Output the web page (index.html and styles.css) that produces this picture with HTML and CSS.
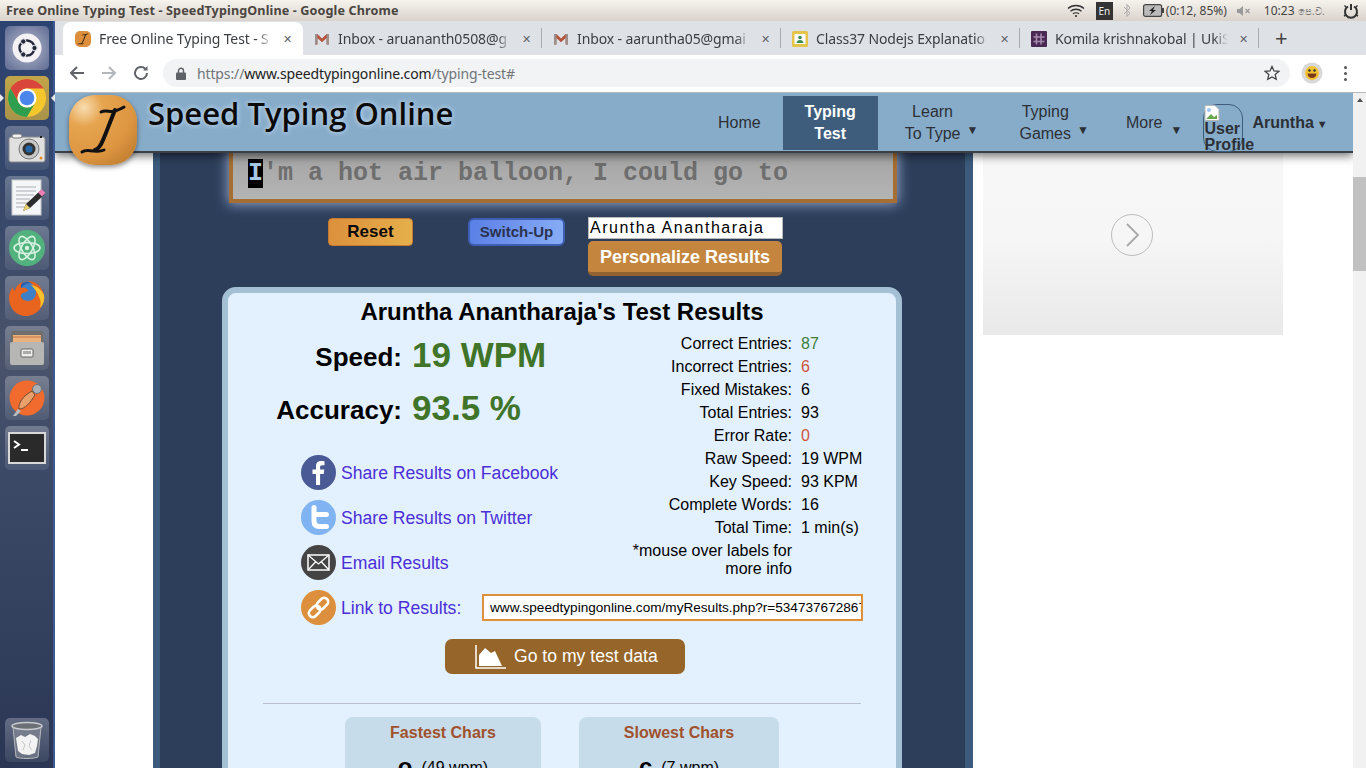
FILE: index.html
```html
<!DOCTYPE html>
<html lang="en">
<head>
	<meta charset="UTF-8">
	<title>Free Online Typing Test - SpeedTypingOnline</title>
	<link rel="stylesheet" href="styles.css">
</head>
<body>
	<svg class="defs" width="0" height="0">
		<symbol id="gmail" viewBox="0 0 16 16"><path d="M1 3h2.400L8 7.600 12.600 3H15v10.500h-2.400V7L8 11.200 3.400 7v6.500H1z" fill="#b5523b"/><path d="M3.400 7v6.500H1V3h2.400zM12.600 7v6.500H15V3h-2.400z" fill="#9b8f8a"/></symbol>
		<symbol id="logo-beam" viewBox="0 0 68 70"><g fill="none" stroke="#111" stroke-linecap="round"><path d="M32 17c5-3 9 1 14-1 3-1 6-2 9-4" stroke-width="3"/><path d="M46 15C41 27 38 36 34 45c-2 5-4 9-8 10" stroke-width="4"/><path d="M13 57c4-3 8-1 12-1 4 .5 7 .5 10-1" stroke-width="3"/></g></symbol>
	</svg>

	<div class="topbar">
		<div class="win-title">Free Online Typing Test - SpeedTypingOnline - Google Chrome</div>
		<div class="indicators">
			<svg class="ind-wifi" width="18" height="14" viewBox="0 0 18 14" fill="none" stroke="#333" stroke-width="1.400"><path d="M1 4.500c4.500-4 11.500-4 16 0M3.500 7.200c3-2.600 8-2.600 11 0M6 9.800c1.600-1.300 4.400-1.300 6 0"/><circle cx="9" cy="12" r="1.100" fill="#333" stroke="none"/></svg>
			<span class="ind-lang">En</span>
			<svg class="ind-bt" width="8" height="15" viewBox="0 0 8 15" fill="none" stroke="#aaa" stroke-width="1"><path d="M1 4l6 6-3 3.500v-12L7 5l-6 6"/></svg>
			<svg class="ind-bat" width="21" height="13" viewBox="0 0 21 13"><rect x=".6" y=".6" width="18" height="11.800" rx="2" fill="#bbb" stroke="#444" stroke-width="1.200"/><rect x="19" y="4" width="2" height="5" fill="#444"/><path d="M12 2L6 7h3l-2 4 6-5h-3z" fill="#222"/></svg>
			<span class="ind-txt">(0:12, 85%)</span>
			<svg class="ind-vol" width="14" height="12" viewBox="0 0 14 12"><path d="M0 4h2.500L6 1v10L2.500 8H0z" fill="#999"/><path d="M8.500 4l4 4M12.500 4l-4 4" stroke="#999" stroke-width="1.200"/></svg>
			<span class="ind-txt ind-clock">10:23 <span class="ind-ampm">පෙ.ව.</span></span>
			<svg class="ind-power" width="16" height="16" viewBox="0 0 16 16" fill="none" stroke="#333" stroke-width="2"><path d="M5 3.500a6 6 0 1 0 6 0M8 1v6"/><path d="M1.500 2.500l2 2M14.500 2.500l-2 2M1 13l2-1M15 13l-2-1" stroke-width="1.400"/></svg>
		</div>
	</div>

	<div class="desktop">
		<div class="launcher">
			<div class="launch-item launch-dash">
				<svg width="30" height="30" viewBox="0 0 30 30"><circle cx="15" cy="15" r="14.500" fill="#f4f2f4"/><circle cx="15" cy="15" r="7.500" fill="none" stroke="#262a40" stroke-width="2.400"/><circle cx="22.500" cy="15" r="2.700" fill="#262a40" stroke="#f4f2f4"/><circle cx="11.300" cy="8.500" r="2.700" fill="#262a40" stroke="#f4f2f4"/><circle cx="11.300" cy="21.500" r="2.700" fill="#262a40" stroke="#f4f2f4"/></svg>
			</div>
			<div class="launch-item launch-active">
				<svg width="40" height="40" viewBox="0 0 40 40"><circle cx="20" cy="20" r="19" fill="#f6c62d"/><path d="M36.450 10.500H20A9.500 9.500 0 0 0 11.770 24.750L3.550 10.500A19 19 0 0 1 36.450 10.500z" fill="#d9453a"/><path d="M3.550 10.500L11.770 24.750A9.500 9.500 0 0 0 28.230 24.750L20 39A19 19 0 0 1 3.550 10.500z" fill="#2f9e4f"/><circle cx="20" cy="20" r="9.500" fill="#fff"/><circle cx="20" cy="20" r="7.300" fill="#4a86ec"/></svg>
			</div>
			<div class="launch-item">
				<svg width="38" height="30" viewBox="0 0 38 30"><rect x="1" y="4" width="36" height="25" rx="2" fill="#e0e0e0" stroke="#8a8a8a"/><rect x="4" y="1" width="10" height="4" rx="2" fill="#f2f2f2" stroke="#777"/><circle cx="21" cy="16" r="10" fill="#c8c8c8" stroke="#777"/><circle cx="21" cy="16" r="6.500" fill="#333"/><circle cx="21" cy="16" r="3.500" fill="#2566a8"/><rect x="32" y="3" width="2" height="2" fill="#222"/><circle cx="33" cy="25" r="1.500" fill="#e88a22"/></svg>
			</div>
			<div class="launch-item">
				<svg width="40" height="40" viewBox="0 0 40 40"><rect x="5" y="2" width="29" height="35" fill="#f4f6f8" stroke="#c5c9cc"/><path d="M9 9h20M9 13h20M9 17h18M9 21h14M9 25h12M9 29h10" stroke="#a9afb5" stroke-width="1"/><path d="M16 33l3-7 15-14 4 4-15 14z" fill="#2c2c2c"/><path d="M31 14.500l3.500-3.500 4 4-3.500 3.500z" fill="#e97fb5"/><path d="M16 33l3-7 4 4z" fill="#e8d06a"/></svg>
			</div>
			<div class="launch-item">
				<svg width="38" height="38" viewBox="0 0 38 38"><circle cx="19" cy="19" r="18" fill="#51b27e"/><g fill="none" stroke="#d8f2e2" stroke-width="1.600"><ellipse cx="19" cy="19" rx="13" ry="5.500"/><ellipse cx="19" cy="19" rx="13" ry="5.500" transform="rotate(60 19 19)"/><ellipse cx="19" cy="19" rx="13" ry="5.500" transform="rotate(120 19 19)"/></g><circle cx="19" cy="19" r="2.200" fill="#d8f2e2"/></svg>
			</div>
			<div class="launch-item">
				<svg width="40" height="40" viewBox="0 0 40 40"><circle cx="21" cy="19" r="15" fill="#2a5fa8"/><circle cx="23" cy="15" r="10" fill="#3f7fc6"/><path d="M37 17c1 11-7 21-18 21C9 38 2 30 2 20c0-5 2-9 4-11 0 2 .5 3 1.500 4C9 8 12 5 16 4c-2 2-2.500 4-2 6 4-1 7 1 7 3-2 2-6 1-7 4s3 6 7 6 8-3 8-8c0-5-3-9-8-12 8 0 14 6 16 14z" fill="#e8641f"/><path d="M37 17c1 5-1 10-4 13 1-4 1-8-1-11-1-4-4-8-8-12 6 1 11 5 13 10z" fill="#f8c22c"/></svg>
			</div>
			<div class="launch-item">
				<svg width="38" height="36" viewBox="0 0 38 36"><rect x="3" y="1" width="32" height="15" rx="2" fill="#6f6e6a"/><rect x="5" y="5" width="28" height="9" fill="#ecb27c"/><path d="M5 7h28" stroke="#c4794a"/><rect x="2" y="12" width="34" height="23" rx="2" fill="#b6b6b4"/><rect x="13" y="19" width="12" height="8" rx="1" fill="#eee" stroke="#666"/><rect x="15" y="21" width="8" height="3" fill="#aaa"/></svg>
			</div>
			<div class="launch-item">
				<svg width="40" height="40" viewBox="0 0 40 40"><circle cx="20" cy="20" r="17.500" fill="#f26b2e"/><path d="M6 38l5-7 3 2-5 5z" fill="#b9bcc0"/><path d="M12 31c-1-6 4-13 13-18l3 4c-5 8-10 14-16 14z" fill="#e9a06a" stroke="#6b4a33"/><circle cx="30" cy="11" r="4.500" fill="#aab0b5" stroke="#6d7276"/></svg>
			</div>
			<div class="launch-item">
				<svg width="38" height="32" viewBox="0 0 38 32"><rect x="1" y="1" width="36" height="30" fill="#2a2a2a" stroke="#d8d8d8" stroke-width="2"/><path d="M6 9l5 3.500L6 16" fill="none" stroke="#fff" stroke-width="2"/><path d="M13 18h7" stroke="#fff" stroke-width="2"/></svg>
			</div>
			<div class="launch-item launch-trash">
				<svg width="34" height="38" viewBox="0 0 34 38"><path d="M3 6l3 30c4 2 18 2 22 0l3-30z" fill="#8f949c" fill-opacity=".55" stroke="#b5b8bc"/><ellipse cx="17" cy="5" rx="15" ry="3.500" fill="#6b6f76" stroke="#c9cccf" stroke-width="1.600"/><path d="M6 17l5-3 4 2 5-3 5 2 3 3-1 7-2 7-6 2-7-1-4-3z" fill="#f2f2f2"/><path d="M12 20l3 4-2 5M21 19l-2 6 3 4" fill="none" stroke="#c4c6c8"/></svg>
			</div>
		</div>

		<div class="chrome">
			<div class="tabstrip">
				<div class="tab tab-active">
					<span class="fav-logo"><svg width="16" height="16"><use href="#logo-beam"/></svg></span>
					<span class="tab-title">Free Online Typing Test - S</span>
					<span class="tab-x">✕</span>
				</div>
				<div class="tab">
					<svg class="fav" width="16" height="16"><use href="#gmail"/></svg>
					<span class="tab-title">Inbox - aruananth0508@g</span>
					<span class="tab-x">✕</span>
				</div>
				<div class="tab">
					<svg class="fav" width="16" height="16"><use href="#gmail"/></svg>
					<span class="tab-title">Inbox - aaruntha05@gmai</span>
					<span class="tab-x">✕</span>
				</div>
				<div class="tab">
					<svg class="fav" width="16" height="16" viewBox="0 0 16 16"><rect width="16" height="16" rx="1.500" fill="#e6c34a"/><rect x="2.500" y="3" width="11" height="10" fill="#fff"/><circle cx="8" cy="6.500" r="1.800" fill="#3d8b4f"/><path d="M4.500 12c0-4 7-4 7 0z" fill="#3d8b4f"/></svg>
					<span class="tab-title">Class37 Nodejs Explanatio</span>
					<span class="tab-x">✕</span>
				</div>
				<div class="tab">
					<svg class="fav" width="16" height="16" viewBox="0 0 16 16"><rect width="16" height="16" rx="1" fill="#4a2a55"/><path d="M5.500 2.500v11M10 2.500v11M2.500 6h11M2.500 10.500h11" stroke="#a58aae" stroke-width="1.600"/></svg>
					<span class="tab-title">Komila krishnakobal | UkiS</span>
					<span class="tab-x">✕</span>
				</div>
				<span class="tab-new">+</span>
			</div>

			<div class="toolbar">
				<svg class="tool-back" width="16" height="16" viewBox="0 0 16 16" fill="none" stroke="#5f6368" stroke-width="2"><path d="M15 8H2M8 2L2 8l6 6"/></svg>
				<svg class="tool-fwd" width="16" height="16" viewBox="0 0 16 16" fill="none" stroke="#b4b7ba" stroke-width="2"><path d="M1 8h13M8 2l6 6-6 6"/></svg>
				<svg class="tool-reload" width="16" height="16" viewBox="0 0 16 16" fill="none" stroke="#5f6368" stroke-width="2"><path d="M14 8a6 6 0 1 1-1.800-4.300"/><path d="M14.500 1v4.500H10" fill="#5f6368" stroke="none"/></svg>
				<div class="omnibox">
					<svg class="lock" width="10" height="13" viewBox="0 0 10 13"><path d="M2.500 6V3.800a2.500 2.500 0 0 1 5 0V6" fill="none" stroke="#5f6368" stroke-width="1.400"/><rect y="5.500" width="10" height="7.500" rx="1" fill="#5f6368"/></svg>
					<span class="url"><span class="url-dim">https://</span>www.speedtypingonline.com<span class="url-dim">/typing-test#</span></span>
					<svg class="star" width="16" height="16" viewBox="0 0 16 16"><path d="M8 1.500l2 4.400 4.800.5-3.600 3.200 1 4.700L8 11.900l-4.200 2.400 1-4.700L1.200 6.400 6 5.900z" fill="none" stroke="#444" stroke-width="1.300"/></svg>
				</div>
				<svg class="avatar" width="22" height="22" viewBox="0 0 22 22"><circle cx="11" cy="11" r="10.500" fill="#d8d8d8"/><circle cx="11" cy="11" r="7" fill="#f2c233"/><path d="M6.500 11.500h9c0 6-9 6-9 0z" fill="#7a3b1a"/><circle cx="8.500" cy="8.500" r="1.300" fill="#333"/><circle cx="13.500" cy="8.500" r="1.300" fill="#333"/></svg>
				<div class="tool-menu"><i></i><i></i><i></i></div>
			</div>

			<div class="viewport">
				<div class="page">
					<div class="nav">
						<div class="logo-tile"><svg width="68" height="70"><use href="#logo-beam"/></svg></div>
						<div class="logo-text">Speed Typing Online</div>
						<div class="nav-links">
							<a class="nav-link nav-home">Home</a>
							<a class="nav-link nav-active">Typing<br>Test</a>
							<a class="nav-link nav-learn">Learn<br>To Type<span class="caret">▼</span></a>
							<a class="nav-link nav-games">Typing<br>Games<span class="caret">▼</span></a>
							<a class="nav-link nav-more">More<span class="caret caret-more">▼</span></a>
							<div class="nav-user">
								<div class="user-pic">
									<svg width="16" height="16" viewBox="0 0 16 16"><path d="M1 .500h10l4 4v11H1z" fill="#fff" stroke="#b5b5b5"/><path d="M2 14l5-5 3 3 3-2v4z" fill="#6aa84f"/><circle cx="5" cy="5" r="2" fill="#9fc5f0"/></svg>
									<span class="user-alt">User Profile</span>
								</div>
								<span class="user-name">Aruntha</span><span class="user-caret">▼</span>
							</div>
						</div>
					</div>

					<div class="main-panel">
						<div class="typing-box">
							<div class="typing-line"><span class="cursor-char">I</span>'m a hot air balloon, I could go to</div>
						</div>

						<div class="controls">
							<button class="btn-reset">Reset</button>
							<button class="btn-switch">Switch-Up</button>
							<div class="name-col">
								<div class="name-input">Aruntha Anantharaja</div>
								<button class="btn-person">Personalize Results</button>
							</div>
						</div>

						<div class="results">
							<h1 class="res-title">Aruntha Anantharaja's Test Results</h1>
							<div class="res-body">
								<div class="res-left">
									<div class="metric"><span class="metric-label">Speed:</span><span class="metric-val">19 WPM</span></div>
									<div class="metric"><span class="metric-label">Accuracy:</span><span class="metric-val">93.5 %</span></div>
									<div class="share-list">
										<div class="share-row">
											<svg class="share-ico" width="35" height="35" viewBox="0 0 35 35"><circle cx="17.500" cy="17.500" r="17.500" fill="#4a5a94"/><path d="M15 30V19h-3.500v-4.500H15v-3.200C15 7.600 17 6 20.300 6c1.500 0 2.700.1 3.200.2v4h-2.300c-1.700 0-2.100.8-2.100 2v2.300h4.200l-.6 4.500h-3.600v11z" fill="#fff"/></svg>
											<a class="share-link">Share Results on Facebook</a>
										</div>
										<div class="share-row">
											<svg class="share-ico" width="35" height="35" viewBox="0 0 35 35"><circle cx="17.500" cy="17.500" r="17.500" fill="#7fb3f2"/><path d="M13 7.500v13.500c0 3.500 2 5.500 5.500 5.500h7M13.500 14.500h12" fill="none" stroke="#fff" stroke-width="5" stroke-linecap="round"/></svg>
											<a class="share-link">Share Results on Twitter</a>
										</div>
										<div class="share-row">
											<svg class="share-ico" width="35" height="35" viewBox="0 0 35 35"><circle cx="17.500" cy="17.500" r="17.500" fill="#444"/><rect x="7" y="10" width="21" height="15" fill="none" stroke="#fff" stroke-width="1.500"/><path d="M7 10l10.500 9L28 10M7 25l7.500-8M28 25l-7.500-8" fill="none" stroke="#fff" stroke-width="1.300"/></svg>
											<a class="share-link">Email Results</a>
										</div>
									</div>
								</div>
								<div class="res-right">
									<div class="stats">
										<span class="stat-label">Correct Entries:</span><span class="stat-good">87</span>
										<span class="stat-label">Incorrect Entries:</span><span class="stat-bad">6</span>
										<span class="stat-label">Fixed Mistakes:</span><span>6</span>
										<span class="stat-label">Total Entries:</span><span>93</span>
										<span class="stat-label">Error Rate:</span><span class="stat-bad">0</span>
										<span class="stat-label">Raw Speed:</span><span>19 WPM</span>
										<span class="stat-label">Key Speed:</span><span>93 KPM</span>
										<span class="stat-label">Complete Words:</span><span>16</span>
										<span class="stat-label">Total Time:</span><span>1 min(s)</span>
									</div>
									<div class="stats-note">*mouse over labels for<br>more info</div>
								</div>
							</div>
							<div class="link-row">
								<svg class="share-ico" width="35" height="35" viewBox="0 0 35 35"><circle cx="17.500" cy="17.500" r="17.500" fill="#dc8f3c"/><g fill="none" stroke="#fff" stroke-width="2.600" transform="rotate(-45 17.500 17.500)"><rect x="5.500" y="13.500" width="13" height="8" rx="4"/><rect x="16.500" y="13.500" width="13" height="8" rx="4"/></g></svg>
								<a class="share-link link-label">Link to Results:</a>
								<div class="link-input">www.speedtypingonline.com/myResults.php?r=534737672867</div>
							</div>
							<div class="data-btn">
								<svg width="31" height="24" viewBox="0 0 31 24"><path d="M1 0v23h30" fill="none" stroke="#fff" stroke-width="1.500"/><path d="M4 21V10l6-7 6 5 4-2 7 15z" fill="#fff"/></svg>
								<span>Go to my test data</span>
							</div>
							<div class="res-rule"></div>
							<div class="char-boxes">
								<div class="char-box">
									<div class="char-head">Fastest Chars</div>
									<div class="char-row"><b>o</b><span>(49 wpm)</span></div>
								</div>
								<div class="char-box char-box-slow">
									<div class="char-head">Slowest Chars</div>
									<div class="char-row"><b>c</b><span>(7 wpm)</span></div>
								</div>
							</div>
						</div>
					</div>

					<div class="ad-col">
						<div class="ad-box">
							<svg width="44" height="44" viewBox="0 0 44 44" fill="none"><circle cx="22" cy="22" r="20.500" stroke="#bdbdbd"/><path d="M17 11l11 11-11 11" stroke="#a8a8a8" stroke-width="1.800"/></svg>
						</div>
					</div>
				</div>
				<div class="scrollbar">
					<span class="sb-up"></span>
					<div class="sb-thumb"></div>
				</div>
			</div>
		</div>
	</div>
</body>
</html>
```
FILE: styles.css
```css
*{
	margin: 0;
	padding: 0;
	box-sizing: border-box;
}
html, body{
	width: 1366px;
	height: 768px;
	overflow: hidden;
}
body{
	font-family: "Liberation Sans", Arial, sans-serif;
	background: #fff;
}
.defs{
	display: block;
	height: 0;
}

/* ubuntu top bar */
.topbar{
	height: 21px;
	display: flex;
	justify-content: space-between;
	align-items: center;
	background: linear-gradient(#f6f3ee, #d9d3cb);
	font-family: "Noto Sans", sans-serif;
	color: #4a4540;
}
.win-title{
	padding-left: 6px;
	font-size: 12.600px;
	font-weight: 700;
	letter-spacing: .12px;
}
.indicators{
	display: flex;
	align-items: center;
	height: 21px;
	font-size: 12px;
	color: #444;
}
.ind-wifi{
	margin-right: 11px;
}
.ind-lang{
	width: 17px;
	height: 18px;
	background: #333;
	color: #eee;
	font-size: 10px;
	line-height: 18px;
	text-align: center;
	margin-right: 10px;
}
.ind-bt{
	margin-right: 12px;
}
.ind-bat{
	margin-right: 2px;
}
.ind-vol{
	margin: 0 13px 0 10px;
}
.ind-ampm{
	color: #777;
	font-size: 10px;
	font-family: "DejaVu Sans", sans-serif;
}
.ind-power{
	margin: 0 7px 0 18px;
}

.desktop{
	display: flex;
	height: 747px;
}

/* launcher */
.launcher{
	width: 55px;
	flex: none;
	padding: 5px 0 6px 5px;
	display: flex;
	flex-direction: column;
	gap: 6px;
	background: linear-gradient(#2c4270 0, #37486a 25%, #4a536a 45%, #3c4a68 60%, #2a3654 100%);
	border-right: 2px solid #3b5994;
}
.launch-item{
	width: 44px;
	height: 44px;
	flex: none;
	display: flex;
	align-items: center;
	justify-content: center;
	border-radius: 5px;
	background: linear-gradient(rgba(255,255,255,.26), rgba(255,255,255,.08));
}
.launch-dash{
	background: radial-gradient(circle at 50% 50%, #c5c9d8 0, #8f97b3 45%, #5d6b92 100%);
}
.launch-active{
	background: linear-gradient(#c2a54a, #a8934a);
	position: relative;
}
.launch-active::before, .launch-active::after{
	content: "";
	position: absolute;
	top: 18px;
	border: 4px solid transparent;
}
.launch-active::before{
	left: -5px;
	border-left-color: #e8e8e8;
}
.launch-active::after{
	right: -6px;
	border-right-color: #e8e8e8;
}
.launch-trash{
	margin-top: auto;
}

/* chrome */
.chrome{
	flex: 1;
	min-width: 0;
	display: flex;
	flex-direction: column;
}
.tabstrip{
	height: 34px;
	flex: none;
	padding: 1px 0 0 8px;
	display: flex;
	align-items: stretch;
	background: #dee1e6;
	font-family: "Noto Sans", sans-serif;
	font-size: 14px;
	color: #3c4043;
}
.tab{
	width: 239px;
	padding: 0 8px 0 11px;
	display: flex;
	align-items: center;
	position: relative;
}
.tab + .tab::after{
	content: "";
	position: absolute;
	right: 0;
	top: 6px;
	bottom: 7px;
	width: 1px;
	background: #a8aaae;
}
.tab-active{
	width: 240px;
	padding-left: 12px;
	background: #fff;
	border-radius: 8px 8px 0 0;
}
.fav{
	flex: none;
}
.fav-logo{
	width: 16px;
	height: 16px;
	flex: none;
	border-radius: 5px;
	background: #dc8f3c;
}
.fav-logo svg{
	display: block;
}
.tab-title{
	flex: 1;
	min-width: 0;
	margin-left: 8px;
	overflow: hidden;
	white-space: nowrap;
	letter-spacing: -.12px;
	-webkit-mask-image: linear-gradient(to left, transparent 0, #000 14px);
	mask-image: linear-gradient(to left, transparent 0, #000 14px);
}
.tab-x{
	width: 16px;
	margin-left: 7px;
	text-align: center;
	font-size: 11px;
	color: #5f6368;
}
.tab-new{
	margin-left: 16px;
	font-size: 22px;
	line-height: 31px;
	color: #444;
}
.toolbar{
	height: 38px;
	flex: none;
	display: flex;
	align-items: center;
	padding-bottom: 1px;
	background: #fff;
	border-bottom: 1px solid #b9b9b9;
}
.tool-back{
	margin-left: 14px;
}
.tool-fwd{
	margin-left: 16px;
}
.tool-reload{
	margin-left: 16px;
}
.omnibox{
	width: 1127px;
	height: 28px;
	margin-left: 14px;
	padding: 0 10px 0 13px;
	display: flex;
	align-items: center;
	border-radius: 14px;
	background: #f1f3f4;
	font-family: "Noto Sans", sans-serif;
	font-size: 14px;
}
.url{
	flex: 1;
	margin-left: 11px;
	color: #222;
	letter-spacing: -.13px;
}
.url-dim{
	color: #70757a;
}
.avatar{
	margin-left: 11px;
}
.tool-menu{
	margin-left: 21px;
	display: flex;
	flex-direction: column;
	gap: 3px;
}
.tool-menu i{
	width: 3px;
	height: 3px;
	border-radius: 50%;
	background: #555;
}

/* page */
.viewport{
	flex: 1;
	min-height: 0;
	display: flex;
}
.page{
	flex: 1;
	min-width: 0;
	position: relative;
	overflow: hidden;
	display: flex;
	align-items: flex-start;
	padding-left: 98px;
}
.scrollbar{
	width: 13px;
	flex: none;
	background: #f1f1f1;
	position: relative;
}
.sb-up{
	display: block;
	width: 0;
	margin: 5px auto 0;
	border: 3.500px solid transparent;
	border-top: 0;
	border-bottom: 4px solid #505050;
}
.sb-thumb{
	position: absolute;
	left: 0;
	right: 0;
	top: 84px;
	height: 94px;
	background: #c1c1c1;
}

/* fixed nav bar over the page */
.nav{
	position: absolute;
	left: 0;
	right: 0;
	top: 0;
	height: 60px;
	display: flex;
	background: #87acca;
	border-bottom: 2px solid #3b3f46;
	box-shadow: 0 3px 9px rgba(0,0,0,.55);
	z-index: 5;
}
.logo-tile{
	width: 68px;
	height: 70px;
	flex: none;
	margin: 2px 0 0 14px;
	border-radius: 26px;
	background: radial-gradient(circle at 22% 18%, #f8dcb0 0, #e6a550 24%, #dd9540 62%, #b5752a 100%);
	box-shadow: 0 2px 5px rgba(0,0,0,.45);
}
.logo-tile svg{
	display: block;
}
.logo-text{
	width: 304px;
	flex: none;
	margin: 0 0 0 11px;
	font-family: "Open Sans", sans-serif;
	font-size: 31px;
	font-weight: 600;
	line-height: 40px;
	color: #0a0a0a;
	text-shadow: 0 0 5px #d5e6f5;
	white-space: nowrap;
}
.nav-links{
	flex: 1;
	display: flex;
	align-items: flex-start;
	font-size: 16px;
	line-height: 22px;
	color: #2c3036;
}
.nav-link{
	display: block;
	text-align: center;
	position: relative;
}
.nav-home{
	margin: 19px 0 0 266px;
}
.nav-active{
	width: 95px;
	height: 54px;
	margin: 3px 0 0 22px;
	padding-top: 5px;
	background: #3e5c7c;
	color: #fff;
	font-weight: 700;
}
.nav-learn{
	margin: 8px 0 0 27px;
}
.nav-games{
	margin: 8px 0 0 59px;
}
.nav-more{
	margin: 19px 0 0 55px;
}
.caret{
	position: absolute;
	left: 100%;
	top: 19px;
	margin-left: 6px;
	font-size: 12px;
	line-height: 20px;
}
.caret-more{
	top: 8px;
	margin-left: 8px;
}
.nav-user{
	margin: 11px 0 0 41px;
	display: flex;
	align-items: flex-start;
	font-weight: 700;
}
.user-pic{
	width: 40px;
	height: 48px;
	flex: none;
	border: 1px solid #3e5c7c;
	border-radius: 14px;
	font-size: 16px;
	line-height: 16px;
	color: #2c3036;
}
.user-pic svg{
	display: block;
}
.user-alt{
	display: block;
	width: 60px;
}
.user-name{
	margin: 8px 0 0 9px;
}
.user-caret{
	margin: 9px 0 0 3px;
	font-size: 11px;
}

/* typing panel */
.main-panel{
	width: 820px;
	height: 800px;
	flex: none;
	padding: 37px 0 0 69px;
	background: #2c3e5a;
	border-left: 7px solid #3b5a7c;
	border-right: 8px solid #3b5a7c;
}
.typing-box{
	width: 668px;
	height: 73px;
	padding: 23px 0 0 15px;
	background: linear-gradient(#9f9f9f, #b4b4b4);
	border: 4px solid #a56f33;
	box-shadow: 0 0 12px 1px rgba(190,205,250,.75);
}
.typing-line{
	font: 700 25px/34px "Liberation Mono", monospace;
	color: #6e6e6e;
}
.cursor-char{
	background: #000;
	color: #a7c9e6;
}
.controls{
	display: flex;
	align-items: flex-start;
	margin: 14px 0 0 99px;
}
.btn-reset, .btn-switch{
	height: 28px;
	margin-top: 1px;
	border-radius: 4px;
	font-family: "Liberation Sans", Arial, sans-serif;
	font-weight: 700;
}
.btn-reset{
	width: 85px;
	background: linear-gradient(100deg, #dc8f3c, #e6b04c);
	border: 1px solid #c67a30;
	font-size: 17px;
	color: #0a0a0a;
}
.btn-switch{
	width: 97px;
	margin-left: 55px;
	padding-bottom: 2px;
	background: linear-gradient(100deg, #5a7fe6, #88adf6);
	border: 2px solid #3f5fb5;
	border-radius: 6px;
	font-size: 15px;
	color: #2a3350;
}
.name-col{
	width: 195px;
	margin-left: 23px;
}
.name-input{
	height: 22px;
	padding-left: 1px;
	background: #fff;
	border: 1px solid #bbb;
	font-size: 16px;
	line-height: 20px;
	letter-spacing: 1.500px;
	color: #000;
	white-space: nowrap;
}
.btn-person{
	display: block;
	width: 194px;
	height: 35px;
	margin-top: 2px;
	padding-top: 2px;
	background: #c4863e;
	border: 0;
	border-bottom: 4px solid #936231;
	border-radius: 5px;
	font-family: "Liberation Sans", Arial, sans-serif;
	font-size: 18px;
	font-weight: 700;
	color: #fff;
}

/* results card */
.results{
	width: 680px;
	height: 560px;
	margin: 11px 0 0 -7px;
	background: #e3f1ff;
	border: 6px solid #a4c0d4;
	border-radius: 14px;
	color: #000;
}
.res-title{
	height: 38px;
	text-align: center;
	font-size: 24px;
	line-height: 38px;
	font-weight: 700;
}
.res-body{
	display: flex;
	height: 249px;
}
.res-left{
	width: 372px;
	flex: none;
}
.metric{
	height: 53px;
	display: flex;
	align-items: center;
}
.metric:first-child{
	margin-top: -1px;
}
.metric-label{
	width: 174px;
	padding-top: 2px;
	text-align: right;
	font-size: 26px;
	font-weight: 700;
}
.metric-val{
	margin: 0 0 3px 10px;
	font-size: 35px;
	font-weight: 700;
	color: #3f7429;
}
.share-list{
	margin: 19px 0 0 73px;
	display: flex;
	flex-direction: column;
	gap: 10px;
}
.share-row{
	height: 35px;
	display: flex;
	align-items: center;
}
.share-ico{
	flex: none;
}
.share-link{
	margin-left: 5px;
	padding-top: 2px;
	font-size: 17.600px;
	color: #4a2fd8;
}
.res-right{
	padding-top: 1px;
	font-size: 16px;
}
.stats{
	display: grid;
	grid-template-columns: 192px auto;
	column-gap: 9px;
	line-height: 23px;
}
.stat-label{
	text-align: right;
}
.stat-good{
	color: #3e7f3a;
}
.stat-bad{
	color: #d0533c;
}
.stats-note{
	width: 192px;
	margin-top: 3px;
	text-align: right;
	line-height: 18px;
}
.link-row{
	height: 35px;
	margin: 10px 0 0 73px;
	display: flex;
	align-items: center;
}
.link-label{
	width: 141px;
	flex: none;
}
.link-input{
	width: 381px;
	height: 27px;
	padding: 0 0 0 6px;
	background: #fff;
	border: 2px solid #e08f3a;
	font-size: 13.600px;
	line-height: 23px;
	overflow: hidden;
	white-space: nowrap;
}
.data-btn{
	width: 240px;
	height: 35px;
	margin: 14px 0 0 217px;
	display: flex;
	align-items: center;
	gap: 8px;
	padding-left: 30px;
	background: #956529;
	border-radius: 7px;
	font-size: 17.600px;
	color: #fff;
}
.res-rule{
	width: 598px;
	height: 1px;
	margin: 29px 0 0 35px;
	background: #b9c2ca;
}
.char-boxes{
	margin: 13px 0 0 117px;
	display: flex;
	gap: 38px;
}
.char-box{
	width: 196px;
	height: 120px;
	padding-top: 7px;
	background: #c7dcea;
	border-radius: 8px;
	text-align: center;
}
.char-box-slow{
	width: 200px;
}
.char-head{
	font-size: 16px;
	font-weight: 700;
	line-height: 18px;
	color: #a0522d;
}
.char-row{
	margin-top: 10px;
	font-size: 16px;
	line-height: 30px;
}
.char-row b{
	font-size: 24px;
	margin-right: 9px;
}
.char-row span{
	position: relative;
	top: -2px;
}

/* ad on the right */
.ad-col{
	margin-left: 10px;
	width: 300px;
	flex: none;
}
.ad-box{
	width: 300px;
	height: 242px;
	padding: 120px 0 0 127px;
	background: linear-gradient(#f8f8f8 0, #f6f6f6 60%, #e9e9e9 100%);
}
```
